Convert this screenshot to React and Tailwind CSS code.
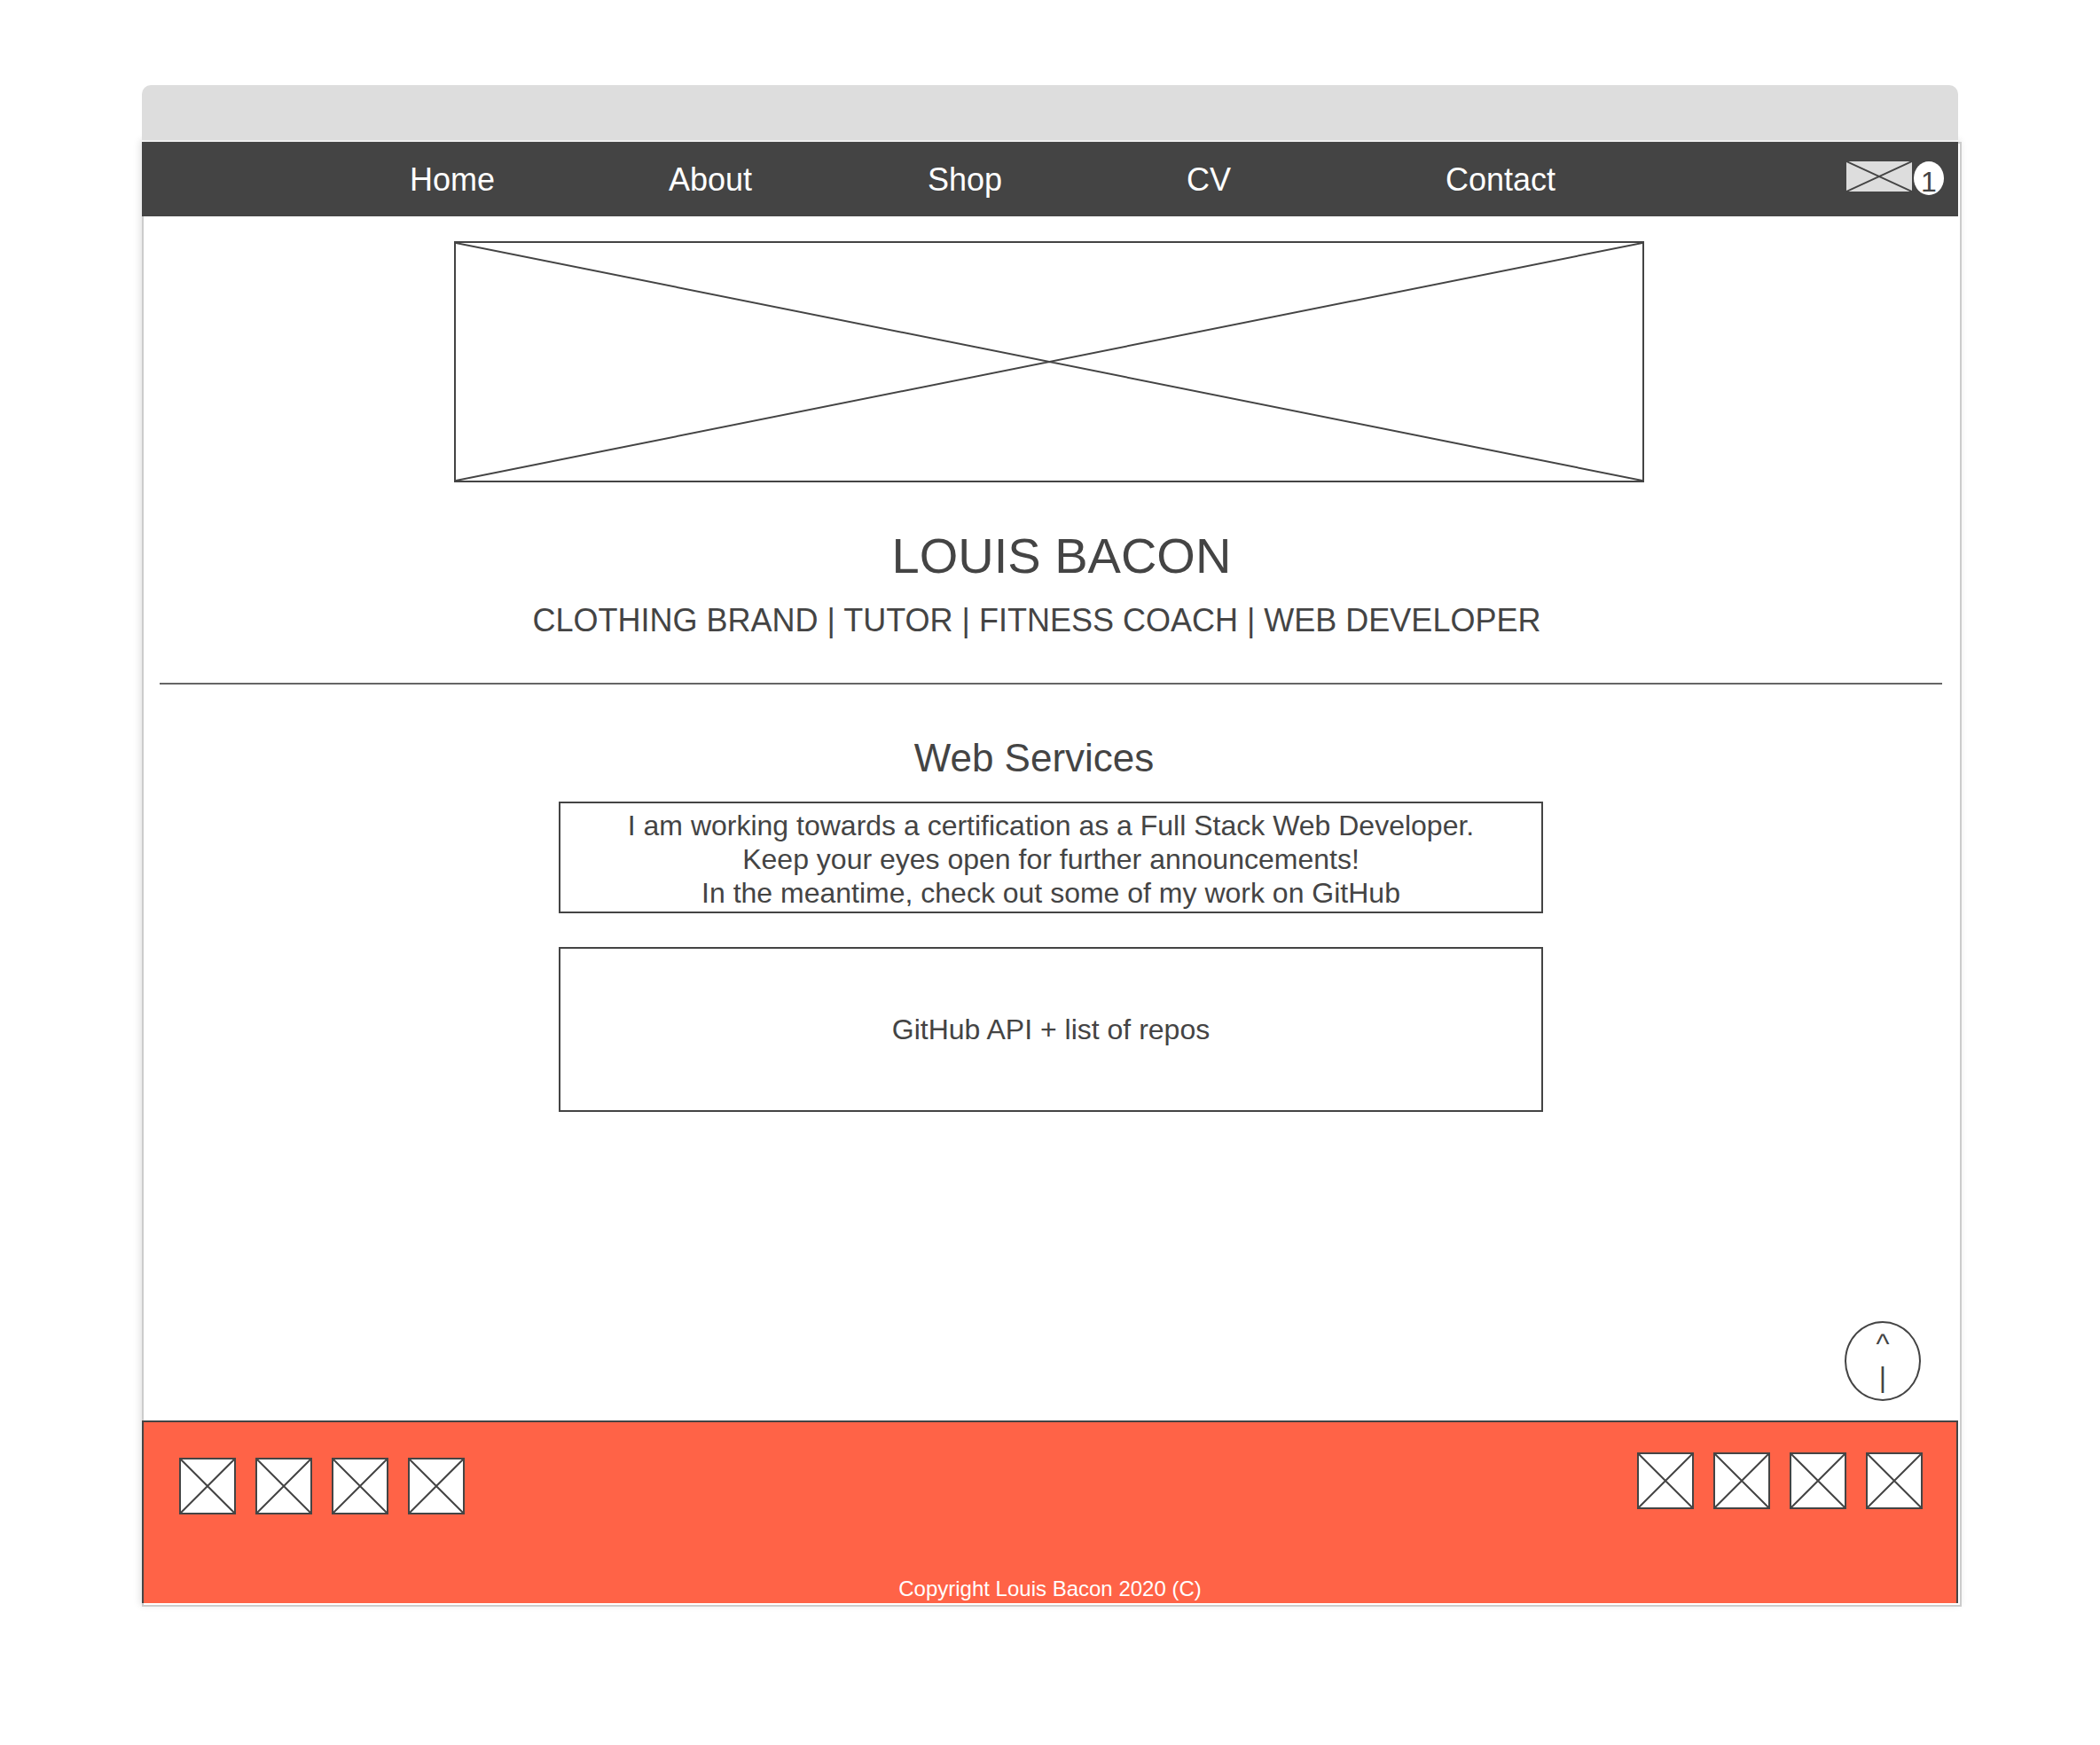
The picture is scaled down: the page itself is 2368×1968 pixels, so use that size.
const navItems = ["Home", "About", "Shop", "CV", "Contact"];
const leftLinks = ["Social link 1", "Social link 2", "Social link 3", "Social link 4"];
const rightLinks = ["Partner link 1", "Partner link 2", "Partner link 3", "Partner link 4"];

function Cross() {
  return (
    <svg
      className="block h-full w-full"
      viewBox="0 0 100 100"
      preserveAspectRatio="none"
      fill="none"
      stroke="#444444"
      strokeWidth="2"
      aria-hidden="true"
    >
      <path d="M0 0L100 100M100 0L0 100" vectorEffect="non-scaling-stroke" />
    </svg>
  );
}

function IconLinks({ labels }) {
  return (
    <ul className="flex gap-[22px]">
      {labels.map((label) => (
        <li key={label}>
          <a href="#" aria-label={label} className="block size-16 border-2 border-[#444444] bg-white">
            <Cross />
          </a>
        </li>
      ))}
    </ul>
  );
}

function Header() {
  return (
    <header className="-mt-0.5 -ml-0.5 mr-0.5 flex bg-[#444444] pr-4 pl-[302px]">
      <nav className="mr-40 flex-1 pt-[23px] pb-[21px]">
        <ul className="grid grid-cols-5">
          {navItems.map((item) => (
            <li key={item}>
              <a href="#" className="text-[36px] leading-10 text-white">
                {item}
              </a>
            </li>
          ))}
        </ul>
      </nav>
      <a href="#" aria-label="Basket, 1 item" className="flex items-start gap-0.5 pt-[22px]">
        <span className="block h-[34px] w-[74px] bg-[#dddddd]">
          <Cross />
        </span>
        <span className="block h-[38px] w-[34px] rounded-[50%] bg-white text-center text-[32px] leading-[46px] text-[#444444]">
          1
        </span>
      </a>
    </header>
  );
}

export default function App() {
  return (
    <div className="min-h-screen bg-white pt-24 pr-[156px] pb-[156px] pl-40 font-['Liberation_Sans',Arial,sans-serif] text-[#444444]">
      <div className="relative z-10 mr-1 mb-0.5 h-[62px] rounded-t-[10px] bg-[#dddddd]" />
      <div className="border-2 border-[#cccccc] bg-white shadow-[-2px_-2px_8px_rgba(0,0,0,0.12)]">
        <Header />

        <main className="-ml-0.5 flex flex-col pt-7">
          <div className="pr-1">
            <div
              role="img"
              aria-label="Banner"
              className="mx-auto h-[272px] w-full max-w-[1342px] border-2 border-[#444444]"
            >
              <Cross />
            </div>
          </div>
          <h1 className="mt-[51px] pl-6 text-center text-[56px] leading-[64px]">LOUIS BACON</h1>
          <p className="mt-[21px] pr-8 text-center text-[36px] leading-10">
            CLOTHING BRAND | TUTOR | FITNESS COACH | WEB DEVELOPER
          </p>
          <hr className="mt-[50px] mr-5 ml-5 border-t-2 border-[#666666]" />

          <h2 className="mt-[57px] pr-[38px] text-center text-[44px] leading-[52px]">Web Services</h2>
          <div className="mx-auto mt-[23px] w-full max-w-[1110px]">
            <div className="border-2 border-[#444444] pt-[6px] pb-0.5 text-center text-[32px] leading-[38px]">
              <p>I am working towards a certification as a Full Stack Web Developer.</p>
              <p>Keep your eyes open for further announcements!</p>
              <p>In the meantime, check out some of my work on GitHub</p>
            </div>
            <div className="mt-[38px] border-2 border-[#444444] py-[72px] text-center text-[32px] leading-[38px]">
              <p>GitHub API + list of repos</p>
            </div>
          </div>

          <button
            type="button"
            aria-label="Back to top"
            className="mt-[236px] mr-[44px] mb-[22px] flex h-[90px] w-[86px] flex-col items-center justify-center self-end rounded-[50%] border-2 border-[#444444] pb-0.5 text-[32px] leading-[38px]"
          >
            <span>^</span>
            <span>|</span>
          </button>
        </main>

        <footer className="-ml-0.5 mr-0.5 mb-0.5 border-2 border-b-0 border-[#444444] bg-[#ff6347] pb-0.5">
          <div className="flex justify-between pr-[38px] pl-10">
            <div className="pt-10">
              <IconLinks labels={leftLinks} />
            </div>
            <div className="pt-[34px]">
              <IconLinks labels={rightLinks} />
            </div>
          </div>
          <p className="mt-[70px] text-center text-[24px] leading-7 text-white">
            Copyright Louis Bacon 2020 (C)
          </p>
        </footer>
      </div>
    </div>
  );
}
